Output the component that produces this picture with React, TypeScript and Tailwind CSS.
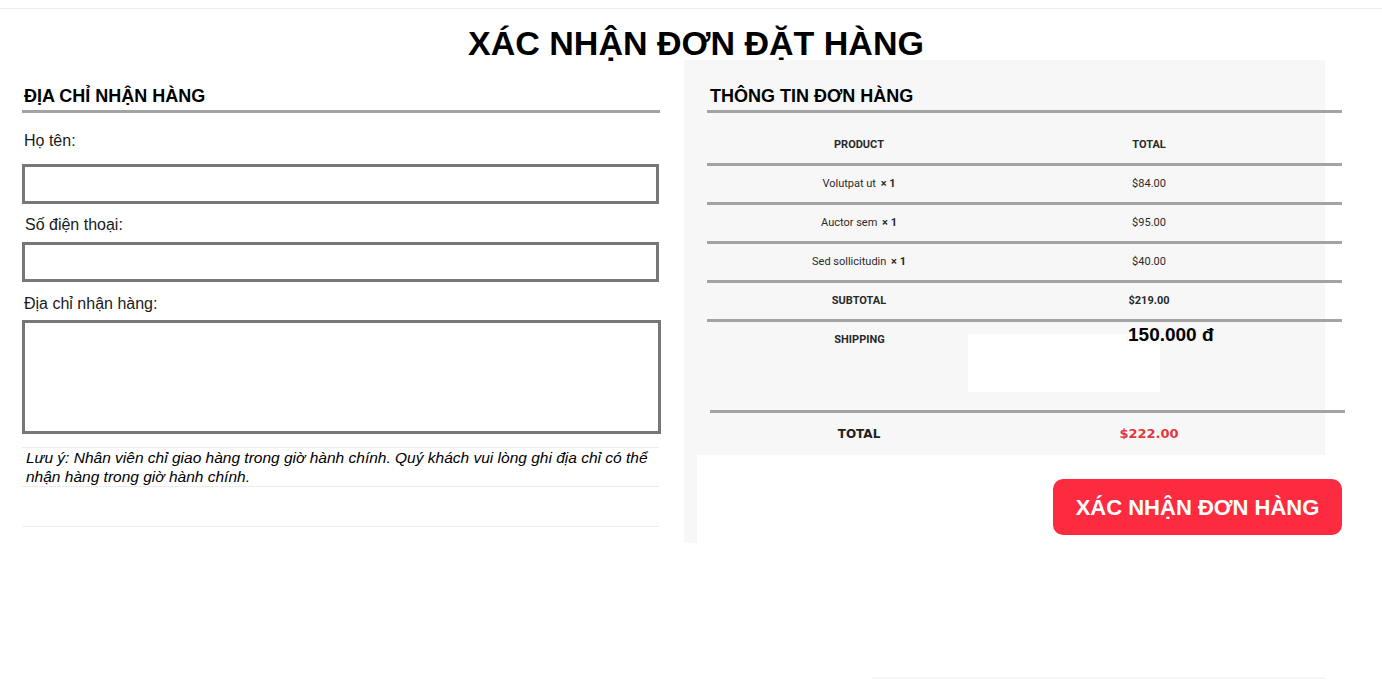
import React from 'react'

const items = [
  { name: 'Volutpat ut', qty: 1, price: '$84.00' },
  { name: 'Auctor sem', qty: 1, price: '$95.00' },
  { name: 'Sed sollicitudin', qty: 1, price: '$40.00' },
]

function Rule({ className = '' }: { className?: string }) {
  return <div className={`h-[3px] w-[635px] bg-[#a3a3a3] ${className}`} />
}

function AddressForm() {
  return (
    <div className="ml-[22px] w-[639px] shrink-0 pt-[25px] font-['Liberation_Sans',sans-serif] text-[#1a1a1a]">
      <h2 className="pl-[2px] text-[18px] font-bold leading-[22px] text-black">ĐỊA CHỈ NHẬN HÀNG</h2>
      <div className="mt-[3px] h-[3px] w-[638px] bg-[#a3a3a3]" />

      <label className="mt-[18px] block pl-[2px] text-[16px] leading-[20px]">Họ tên:</label>
      <input className="mt-[13px] block h-[40px] w-[637px] border-[3px] border-[#777] bg-white outline-none" />

      <label className="mt-[11px] block pl-[3px] text-[16px] leading-[20px]">Số điện thoại:</label>
      <input className="mt-[7px] block h-[40px] w-[637px] border-[3px] border-[#777] bg-white outline-none" />

      <label className="mt-[12px] block pl-[2px] text-[16px] leading-[20px]">Địa chỉ nhận hàng:</label>
      <textarea className="mt-[6px] block h-[114px] w-[639px] resize-none border-[3px] border-[#777] bg-white outline-none" />

      <p className="mt-[13px] w-[637px] border-y border-[#ececec] pl-[4px] pr-[4px] text-[15.5px] italic leading-[19px] text-black">
        Lưu ý: Nhân viên chỉ giao hàng trong giờ hành chính. Quý khách vui lòng ghi địa chỉ có thể nhận hàng trong giờ hành chính.
      </p>
      <div className="mt-[39px] h-px w-[637px] bg-[#eeeeee]" />
    </div>
  )
}

function OrderSummary() {
  return (
    <div className="ml-[23px] w-[658px] shrink-0">
      <div className="w-[641px] bg-[#f7f7f7] pt-[25px]">
        <h2 className="pl-[26px] font-['Liberation_Sans',sans-serif] text-[18px] font-bold leading-[22px] text-black">
          THÔNG TIN ĐƠN HÀNG
        </h2>
        <Rule className="ml-[23px] mt-[3px]" />

        <div className="font-['Roboto',sans-serif] text-[11px] text-[#2a2a2a]">
          <div className="ml-[23px] grid h-[50px] grid-cols-[304px_276px] items-start pt-[25px] text-center font-bold leading-[13px]">
            <span>PRODUCT</span>
            <span>TOTAL</span>
          </div>
          <Rule className="ml-[23px]" />

          {items.map((item) => (
            <div key={item.name}>
              <div className="ml-[23px] grid h-[36px] grid-cols-[304px_276px] items-center text-center">
                <span>
                  {item.name} <b className="ml-[2px]">× {item.qty}</b>
                </span>
                <span>{item.price}</span>
              </div>
              <Rule className="ml-[23px]" />
            </div>
          ))}

          <div className="ml-[23px] grid h-[36px] grid-cols-[304px_276px] items-center text-center font-bold">
            <span>SUBTOTAL</span>
            <span>$219.00</span>
          </div>
          <Rule className="ml-[23px]" />

          <div className="ml-[23px] flex h-[88px] items-start">
            <span className="w-[261px] shrink-0 pl-[44px] pt-[11px] text-center font-bold leading-[14px]">SHIPPING</span>
            <div className="mt-[12px] h-[58px] w-[192px] shrink-0 bg-white" />
            <span className="relative -ml-[32px] pt-[2px] font-['Liberation_Sans',sans-serif] text-[19px] font-bold leading-[22px] text-black">
              150.000 đ
            </span>
          </div>
          <Rule className="ml-[26px]" />

          <div className="ml-[23px] grid h-[42px] grid-cols-[304px_276px] items-center text-center font-['DejaVu_Sans',sans-serif] font-bold">
            <span className="text-[12px] text-[#222]">TOTAL</span>
            <span className="text-[13px] text-[#e0383d]">$222.00</span>
          </div>
        </div>
      </div>

      <div className="flex h-[88px] justify-end border-l-[13px] border-[#f7f7f7] pt-[24px]">
        <button className="h-[56px] w-[289px] rounded-[10px] bg-[#fd2b40] font-['Liberation_Sans',sans-serif] text-[22px] font-bold text-white">
          XÁC NHẬN ĐƠN HÀNG
        </button>
      </div>

      <div className="ml-[188px] mt-[134px] h-[2px] w-[453px] bg-[#f5f5f5]" />
    </div>
  )
}

export default function App() {
  return (
    <div className="h-[681px] overflow-hidden bg-white">
      <div className="h-2" />
      <div className="h-px bg-[#ececec]" />
      <h1 className="mt-[17px] pl-[10px] text-center font-['Liberation_Sans',sans-serif] text-[34px] font-bold leading-[34px] text-black">
        XÁC NHẬN ĐƠN ĐẶT HÀNG
      </h1>
      <div className="flex">
        <AddressForm />
        <OrderSummary />
      </div>
    </div>
  )
}
